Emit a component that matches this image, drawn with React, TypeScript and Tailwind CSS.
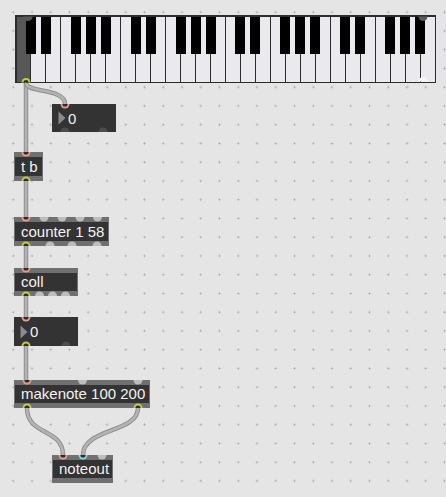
import React from "react";

type PortKind = "pink" | "cyan" | "yellow" | "grey" | "dark" | "kdark" | "kfaint";
type Port = { x: number; y: number; top: boolean; kind: PortKind };

const COLORS: Record<PortKind, string> = {
  pink: "#e59b8d",
  cyan: "#8fd2e2",
  yellow: "#c3ca47",
  grey: "#bdbdbd",
  dark: "#4c4c4c",
  kdark: "#5a5a5a",
  kfaint: "#f6f6f8",
};

const ring = (k: PortKind) => k === "pink" || k === "cyan" || k === "yellow";

const ports: Port[] = [
  // kslider
  { x: 28, y: 16.5, top: true, kind: "kdark" },
  { x: 423, y: 16.5, top: true, kind: "kdark" },
  { x: 26, y: 82.5, top: false, kind: "yellow" },
  { x: 423, y: 81.5, top: false, kind: "kfaint" },
  // number 1
  { x: 65, y: 104, top: true, kind: "pink" },
  { x: 65, y: 132, top: false, kind: "dark" },
  { x: 103, y: 132, top: false, kind: "dark" },
  // t b
  { x: 26, y: 152, top: true, kind: "pink" },
  { x: 26, y: 181, top: false, kind: "yellow" },
  // counter
  { x: 26, y: 217, top: true, kind: "pink" },
  { x: 44, y: 217, top: true, kind: "grey" },
  { x: 62, y: 217, top: true, kind: "grey" },
  { x: 80, y: 217, top: true, kind: "grey" },
  { x: 97.5, y: 217, top: true, kind: "grey" },
  { x: 26, y: 246, top: false, kind: "yellow" },
  { x: 50, y: 246, top: false, kind: "grey" },
  { x: 72, y: 246, top: false, kind: "grey" },
  { x: 97, y: 246, top: false, kind: "grey" },
  // coll
  { x: 26, y: 268, top: true, kind: "pink" },
  { x: 26, y: 296, top: false, kind: "yellow" },
  { x: 39.5, y: 296, top: false, kind: "grey" },
  { x: 52.5, y: 296, top: false, kind: "grey" },
  { x: 65.5, y: 296, top: false, kind: "grey" },
  // number 2
  { x: 26, y: 317, top: true, kind: "pink" },
  { x: 26, y: 346, top: false, kind: "yellow" },
  { x: 66, y: 346, top: false, kind: "dark" },
  // makenote
  { x: 27, y: 380, top: true, kind: "pink" },
  { x: 82.5, y: 380, top: true, kind: "grey" },
  { x: 138, y: 380, top: true, kind: "grey" },
  { x: 27, y: 408, top: false, kind: "yellow" },
  { x: 138, y: 408, top: false, kind: "yellow" },
  // noteout
  { x: 63, y: 455, top: true, kind: "pink" },
  { x: 83, y: 455, top: true, kind: "cyan" },
  { x: 102, y: 455, top: true, kind: "grey" },
];

const cables: string[] = [
  "M26 83 L26 152",
  "M26 83 C26 93 65 88 65 104",
  "M26 181 L26 217",
  "M26 246 L26 268",
  "M26 296 L26 317",
  "M26 346 L26 380",
  "M27 408 C27 436 63 428 63 455",
  "M138 408 C138 433 83 428 83 455",
];

function semi(cx: number, y: number, r: number, top: boolean) {
  return `M ${cx - r} ${y} A ${r} ${r} 0 0 ${top ? 0 : 1} ${cx + r} ${y} Z`;
}

function Keyboard() {
  const whiteW = (421 - 3 - 27 * 1.5) / 28;
  const blackAfter = [0, 1, 3, 4, 5];
  const blacks: number[] = [];
  for (let k = 0; k < 27; k++) {
    if (blackAfter.includes(k % 7)) {
      blacks.push(1.5 + (k + 1) * whiteW + k * 1.5 + 0.75);
    }
  }
  return (
    <div className="absolute left-[15px] top-[15px] w-[421px] h-[68px] bg-[#2c2c2c] p-[1.5px] flex gap-[1.5px]">
      {Array.from({ length: 28 }).map((_, i) => (
        <div key={i} className={i === 0 ? "flex-1 bg-[#575757]" : "flex-1 bg-[#e9e9ee]"} />
      ))}
      {blacks.map((c, i) => (
        <div
          key={"b" + i}
          className="absolute top-[1.5px] h-[37.5px] w-[10px] bg-black"
          style={{ left: c - 5 }}
        />
      ))}
    </div>
  );
}

function Obj({ x, y, w, h, text }: { x: string; y: string; w: string; h: string; text: string }) {
  return (
    <div className={`absolute ${x} ${y} ${w} ${h} bg-[#707070] px-px pt-[5px] pb-[5px] flex`}>
      <div className="flex-1 bg-[#333333] flex items-center pl-[6px] text-[15px] leading-[18px] text-[#f2f2f2] whitespace-nowrap">
        {text}
      </div>
    </div>
  );
}

function Num({ x, y, h }: { x: string; y: string; h: string }) {
  return (
    <div className={`absolute ${x} ${y} w-[64px] ${h} bg-[#333333] flex items-center text-[15px] text-[#f2f2f2]`}>
      <svg width="16" height="14" viewBox="0 0 16 14" className="shrink-0">
        <path d="M6.5 0.5 L13.5 7 L6.5 13.5 Z" fill="#8a8a8a" />
      </svg>
      <span className="leading-[18px] pt-px">0</span>
    </div>
  );
}

export default function App() {
  return (
    <div
      className="relative w-[446px] h-[497px] overflow-hidden bg-[#e5e5e5] bg-[radial-gradient(circle,#a8a8a8_0.8px,transparent_1.2px)] bg-[length:18.75px_18.75px] bg-[position:3.9px_2.8px]"
      style={{ fontFamily: '"Liberation Sans", Arial, sans-serif' }}
    >
      <svg className="absolute left-0 top-0 z-0" width="446" height="497">
        {cables.map((d, i) => (
          <g key={i}>
            <path d={d} fill="none" stroke="#8e8e8e" strokeWidth="4.5" />
            <path d={d} fill="none" stroke="#b3b3b3" strokeWidth="2.6" />
          </g>
        ))}
      </svg>

      <div className="absolute inset-0 z-10">
        <Keyboard />
        <Num x="left-[52px]" y="top-[104px]" h="h-[28px]" />
        <Obj x="left-[14px]" y="top-[152px]" w="w-[29px]" h="h-[29px]" text="t b" />
        <Obj x="left-[14px]" y="top-[217px]" w="w-[95px]" h="h-[29px]" text="counter 1 58" />
        <Obj x="left-[14px]" y="top-[268px]" w="w-[64px]" h="h-[28px]" text="coll" />
        <Num x="left-[14px]" y="top-[317px]" h="h-[29px]" />
        <Obj x="left-[14px]" y="top-[380px]" w="w-[136px]" h="h-[28px]" text="makenote 100 200" />
        <Obj x="left-[52px]" y="top-[455px]" w="w-[61px]" h="h-[28px]" text="noteout" />
      </div>

      <svg className="absolute left-0 top-0 z-20 pointer-events-none" width="446" height="497">
        {ports.map((p, i) => (
          <g key={i}>
            <path d={semi(p.x, p.y, 4.5, p.top)} fill={COLORS[p.kind]} />
            {ring(p.kind) && <path d={semi(p.x, p.y, 2.6, p.top)} fill="#2e2e2e" />}
          </g>
        ))}
      </svg>
    </div>
  );
}
